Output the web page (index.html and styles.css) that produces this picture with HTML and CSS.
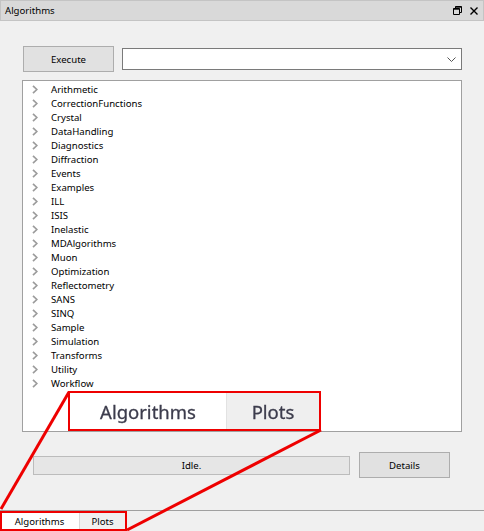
FILE: index.html
```html
<!DOCTYPE html>
<html>
<head>
<meta charset="utf-8">
<link rel="stylesheet" href="styles.css">
</head>
<body>
<div class="window">
  <div class="titlebar">
    <span class="title">Algorithms</span>
    <span class="tb-icons">
      <svg class="tb-icon" width="9" height="9" viewBox="0 0 9 9"><path d="M2.5 0.5h6v6h-2M0.5 2.5h6v6h-6z M2.5 2.5v-2" fill="none" stroke="#000" stroke-width="1"/><path d="M0.5 2.5h6v1.2h-6z" fill="#000"/><path d="M2.5 0.5h6v1.2h-6z" fill="#000"/></svg>
      <svg class="tb-icon" width="8" height="8" viewBox="0 0 8 8"><path d="M0.5 0.5L7.5 7.5M7.5 0.5L0.5 7.5" stroke="#000" stroke-width="1.4"/></svg>
    </span>
  </div>
  <div class="main">
    <div class="exec-row">
      <div class="btn exec">Execute</div>
      <div class="combo">
        <svg class="combo-arrow" width="9" height="5" viewBox="0 0 9 5"><path d="M0.5 0.5L4.5 4.5L8.5 0.5" fill="none" stroke="#555" stroke-width="1"/></svg>
      </div>
    </div>
    <div class="tree">
      <div class="row"><svg class="chev" width="6" height="9" viewBox="0 0 6 9"><path d="M1 0.8L4.8 4.5L1 8.2" fill="none" stroke="#9c9c9c" stroke-width="1.7"/></svg><span>Arithmetic</span></div>
      <div class="row"><svg class="chev" width="6" height="9" viewBox="0 0 6 9"><path d="M1 0.8L4.8 4.5L1 8.2" fill="none" stroke="#9c9c9c" stroke-width="1.7"/></svg><span>CorrectionFunctions</span></div>
      <div class="row"><svg class="chev" width="6" height="9" viewBox="0 0 6 9"><path d="M1 0.8L4.8 4.5L1 8.2" fill="none" stroke="#9c9c9c" stroke-width="1.7"/></svg><span>Crystal</span></div>
      <div class="row"><svg class="chev" width="6" height="9" viewBox="0 0 6 9"><path d="M1 0.8L4.8 4.5L1 8.2" fill="none" stroke="#9c9c9c" stroke-width="1.7"/></svg><span>DataHandling</span></div>
      <div class="row"><svg class="chev" width="6" height="9" viewBox="0 0 6 9"><path d="M1 0.8L4.8 4.5L1 8.2" fill="none" stroke="#9c9c9c" stroke-width="1.7"/></svg><span>Diagnostics</span></div>
      <div class="row"><svg class="chev" width="6" height="9" viewBox="0 0 6 9"><path d="M1 0.8L4.8 4.5L1 8.2" fill="none" stroke="#9c9c9c" stroke-width="1.7"/></svg><span>Diffraction</span></div>
      <div class="row"><svg class="chev" width="6" height="9" viewBox="0 0 6 9"><path d="M1 0.8L4.8 4.5L1 8.2" fill="none" stroke="#9c9c9c" stroke-width="1.7"/></svg><span>Events</span></div>
      <div class="row"><svg class="chev" width="6" height="9" viewBox="0 0 6 9"><path d="M1 0.8L4.8 4.5L1 8.2" fill="none" stroke="#9c9c9c" stroke-width="1.7"/></svg><span>Examples</span></div>
      <div class="row"><svg class="chev" width="6" height="9" viewBox="0 0 6 9"><path d="M1 0.8L4.8 4.5L1 8.2" fill="none" stroke="#9c9c9c" stroke-width="1.7"/></svg><span>ILL</span></div>
      <div class="row"><svg class="chev" width="6" height="9" viewBox="0 0 6 9"><path d="M1 0.8L4.8 4.5L1 8.2" fill="none" stroke="#9c9c9c" stroke-width="1.7"/></svg><span>ISIS</span></div>
      <div class="row"><svg class="chev" width="6" height="9" viewBox="0 0 6 9"><path d="M1 0.8L4.8 4.5L1 8.2" fill="none" stroke="#9c9c9c" stroke-width="1.7"/></svg><span>Inelastic</span></div>
      <div class="row"><svg class="chev" width="6" height="9" viewBox="0 0 6 9"><path d="M1 0.8L4.8 4.5L1 8.2" fill="none" stroke="#9c9c9c" stroke-width="1.7"/></svg><span>MDAlgorithms</span></div>
      <div class="row"><svg class="chev" width="6" height="9" viewBox="0 0 6 9"><path d="M1 0.8L4.8 4.5L1 8.2" fill="none" stroke="#9c9c9c" stroke-width="1.7"/></svg><span>Muon</span></div>
      <div class="row"><svg class="chev" width="6" height="9" viewBox="0 0 6 9"><path d="M1 0.8L4.8 4.5L1 8.2" fill="none" stroke="#9c9c9c" stroke-width="1.7"/></svg><span>Optimization</span></div>
      <div class="row"><svg class="chev" width="6" height="9" viewBox="0 0 6 9"><path d="M1 0.8L4.8 4.5L1 8.2" fill="none" stroke="#9c9c9c" stroke-width="1.7"/></svg><span>Reflectometry</span></div>
      <div class="row"><svg class="chev" width="6" height="9" viewBox="0 0 6 9"><path d="M1 0.8L4.8 4.5L1 8.2" fill="none" stroke="#9c9c9c" stroke-width="1.7"/></svg><span>SANS</span></div>
      <div class="row"><svg class="chev" width="6" height="9" viewBox="0 0 6 9"><path d="M1 0.8L4.8 4.5L1 8.2" fill="none" stroke="#9c9c9c" stroke-width="1.7"/></svg><span>SINQ</span></div>
      <div class="row"><svg class="chev" width="6" height="9" viewBox="0 0 6 9"><path d="M1 0.8L4.8 4.5L1 8.2" fill="none" stroke="#9c9c9c" stroke-width="1.7"/></svg><span>Sample</span></div>
      <div class="row"><svg class="chev" width="6" height="9" viewBox="0 0 6 9"><path d="M1 0.8L4.8 4.5L1 8.2" fill="none" stroke="#9c9c9c" stroke-width="1.7"/></svg><span>Simulation</span></div>
      <div class="row"><svg class="chev" width="6" height="9" viewBox="0 0 6 9"><path d="M1 0.8L4.8 4.5L1 8.2" fill="none" stroke="#9c9c9c" stroke-width="1.7"/></svg><span>Transforms</span></div>
      <div class="row"><svg class="chev" width="6" height="9" viewBox="0 0 6 9"><path d="M1 0.8L4.8 4.5L1 8.2" fill="none" stroke="#9c9c9c" stroke-width="1.7"/></svg><span>Utility</span></div>
      <div class="row"><svg class="chev" width="6" height="9" viewBox="0 0 6 9"><path d="M1 0.8L4.8 4.5L1 8.2" fill="none" stroke="#9c9c9c" stroke-width="1.7"/></svg><span>Workflow</span></div>
    </div>
    <div class="status-row">
      <div class="progress">Idle.</div>
      <div class="btn details">Details</div>
    </div>
  </div>
  <div class="tabbar">
    <div class="tab active">Algorithms</div>
    <div class="tab">Plots</div>
  </div>

  <div class="magnified">
    <div class="mag-tab mag-active">Algorithms</div>
    <div class="mag-tab mag-plots">Plots</div>
  </div>
  <svg class="annot" width="484" height="531" viewBox="0 0 484 531">
    <line x1="1" y1="509" x2="69" y2="392" stroke="#ee0000" stroke-width="3"/>
    <line x1="127" y1="530" x2="321" y2="430" stroke="#ee0000" stroke-width="3"/>
    <rect x="1" y="512" width="125" height="18" fill="none" stroke="#ee0000" stroke-width="2"/>
    <rect x="69" y="392" width="251" height="38" fill="none" stroke="#ee0000" stroke-width="2"/>
  </svg>
</div>
</body>
</html>
```

FILE: styles.css
```css
* { box-sizing: border-box; }
html, body {
  margin: 0;
  padding: 0;
  background: #f0f0f0;
}
body {
  font-family: "Noto Sans", "Open Sans", sans-serif;
  font-size: 9.6px;
  color: #000;
}
.window {
  position: relative;
  width: 484px;
  height: 531px;
  overflow: hidden;
}
.titlebar {
  height: 21px;
  background: #d9d9d9;
  border: 1px solid #c4c4c4;
  display: flex;
  align-items: center;
  justify-content: space-between;
  padding: 0 5px 0 4px;
}
.title { font-size: 9.6px; }
.tb-icons {
  display: flex;
  align-items: center;
  gap: 8px;
}
.main {
  padding: 25px 22px 0 22px;
}
.exec-row {
  display: flex;
  align-items: center;
  height: 26px;
  padding-left: 1px;
  gap: 8px;
}
.btn {
  background: #e1e1e1;
  border: 1px solid #adadad;
  display: flex;
  align-items: center;
  justify-content: center;
  height: 26px;
}
.exec { width: 91px; }
.combo {
  width: 340px;
  height: 22px;
  background: #fff;
  border: 1px solid #7a7a7a;
  display: flex;
  align-items: center;
  justify-content: flex-end;
  padding-right: 5px;
}
.tree {
  margin-top: 8px;
  width: 440px;
  height: 352px;
  background: #fff;
  border: 1px solid #a0a0a0;
  padding-top: 1px;
}
.row {
  height: 14px;
  display: flex;
  align-items: center;
  padding-left: 9px;
}
.chev {
  margin-right: 13px;
  flex: none;
}
.status-row {
  margin-top: 20px;
  display: flex;
  align-items: center;
  padding-left: 11px;
  gap: 9px;
}
.progress {
  width: 317px;
  height: 19px;
  background: #e6e6e6;
  border: 1px solid #bcbcbc;
  display: flex;
  align-items: center;
  justify-content: center;
}
.details { width: 91px; }
.tabbar {
  position: absolute;
  left: 0;
  right: 0;
  bottom: 0;
  height: 21px;
  border-top: 1px solid #a0a0a0;
  display: flex;
}
.tab {
  height: 20px;
  display: flex;
  align-items: center;
  justify-content: center;
  width: 46px;
  background: #f0f0f0;
  border-left: 1px solid #d9d9d9;
}
.tab.active {
  width: 79px;
  background: #fff;
  border-left: none;
}
.magnified {
  position: absolute;
  left: 70px;
  top: 393px;
  width: 249px;
  height: 36px;
  display: flex;
  background: #fff;
}
.mag-tab {
  display: flex;
  align-items: center;
  justify-content: center;
  font-size: 18.5px;
  color: #3c3c4c;
  -webkit-text-stroke: 0.3px #3c3c4c;
  filter: blur(0.55px);
}
.mag-active { width: 156px; }
.mag-plots {
  flex: 1;
  background: #efefef;
  border-left: 1px solid #e2e2e2;
}
.annot {
  position: absolute;
  left: 0;
  top: 0;
  pointer-events: none;
}
```
